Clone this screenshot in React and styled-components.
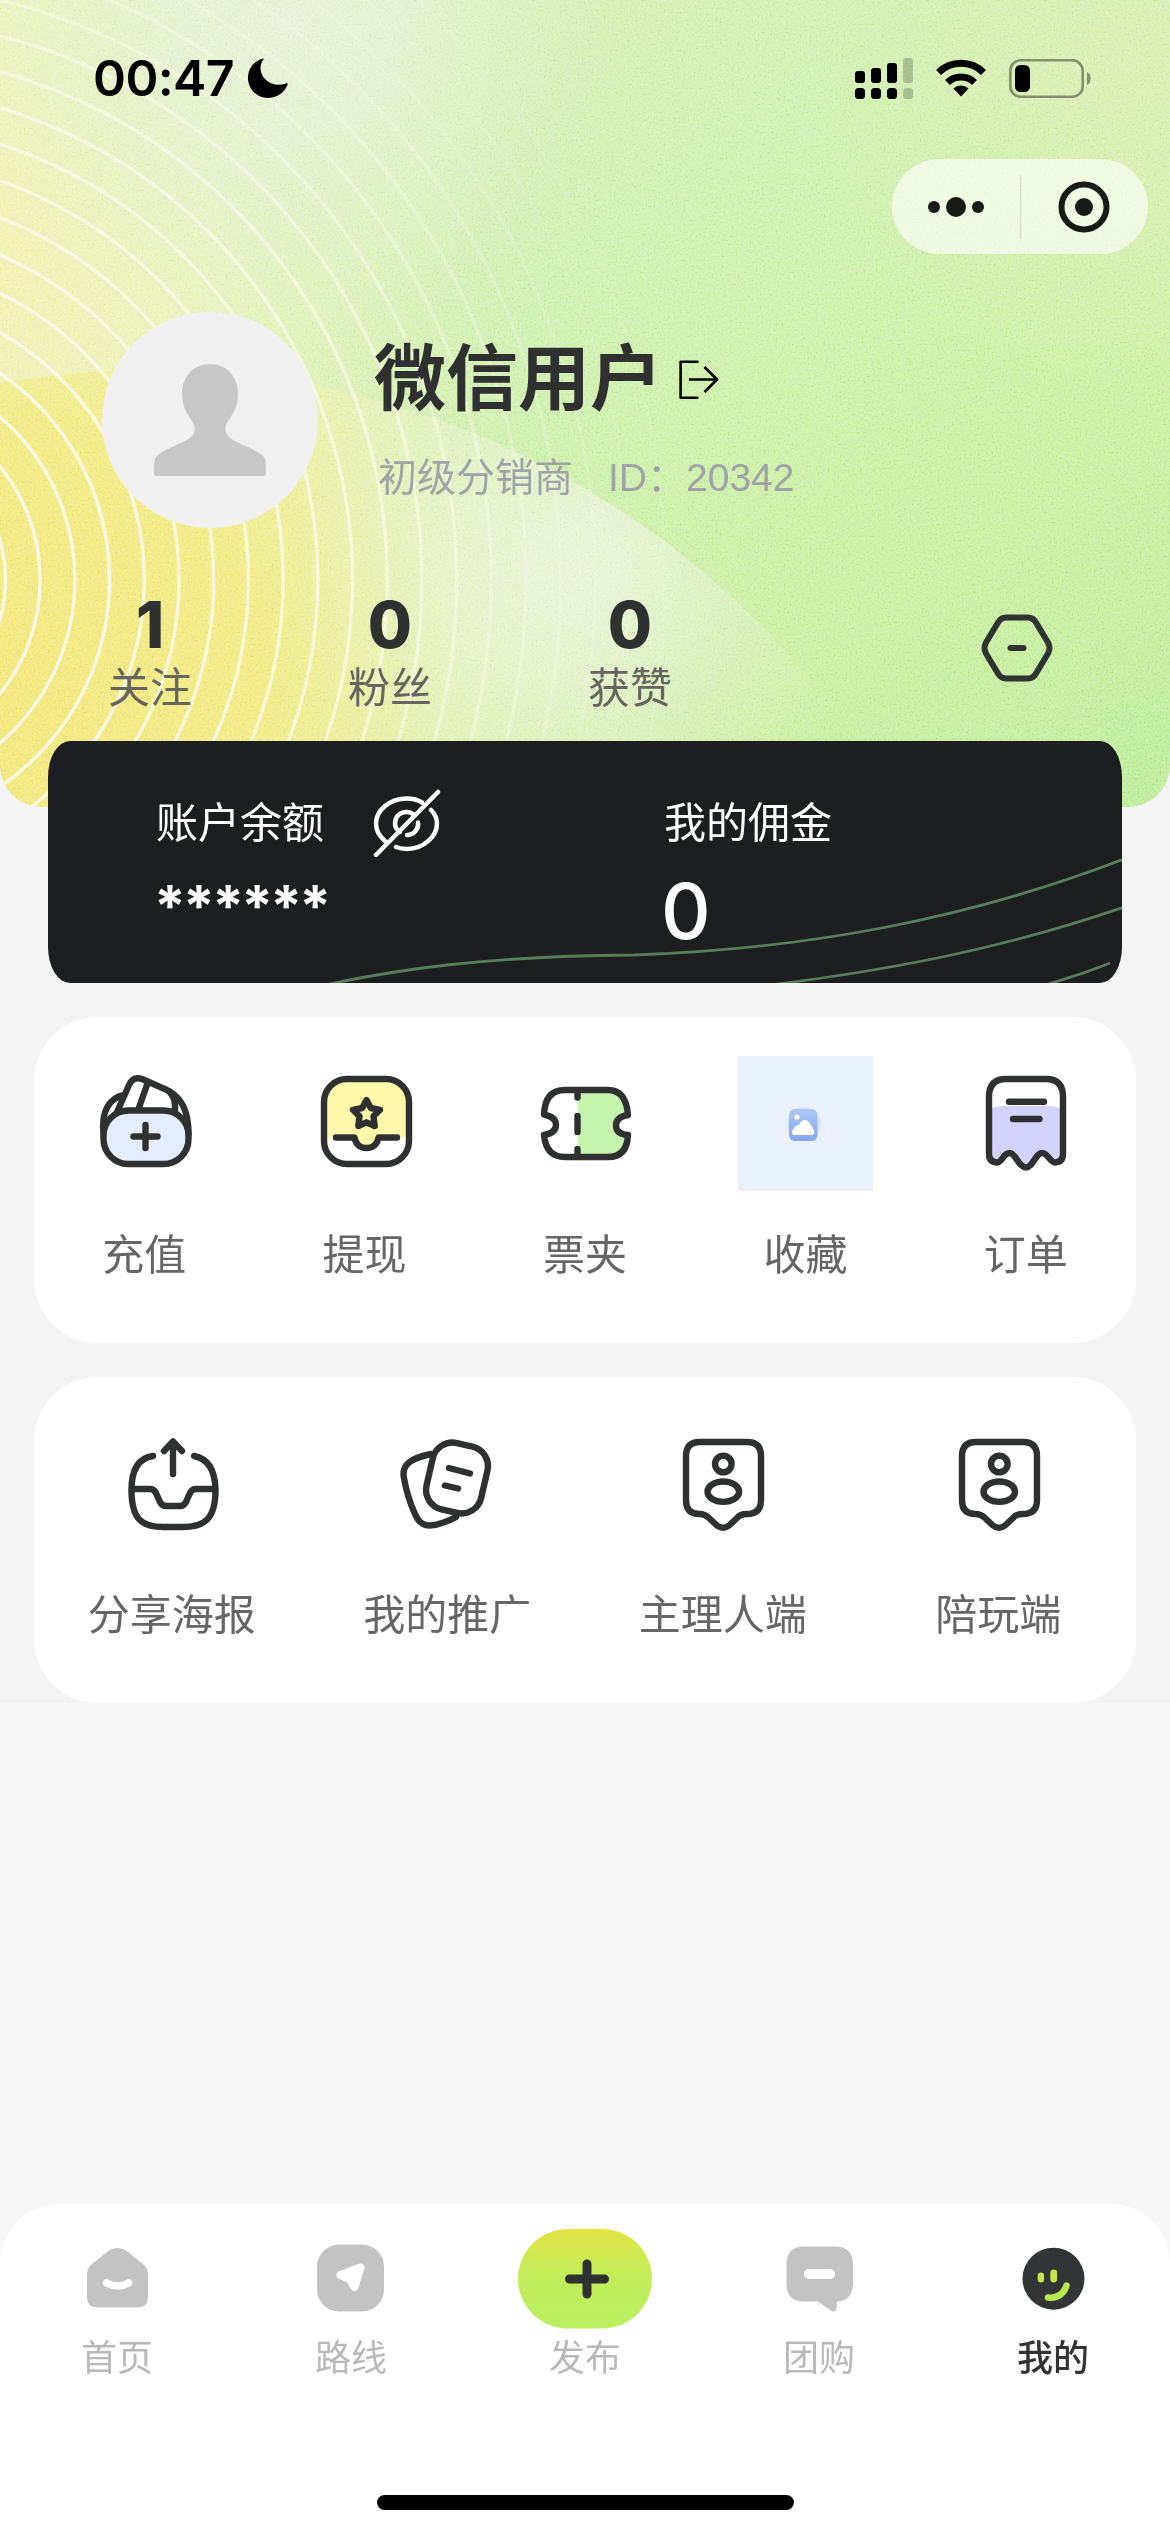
import React from "react";
import styled, { createGlobalStyle } from "styled-components";

const cjk = `"Noto Sans CJK SC", sans-serif`;
const latin = `Inter, "Noto Sans CJK SC", sans-serif`;
const INK = "#2f3030";

const GlobalStyle = createGlobalStyle`
  * { box-sizing: border-box; }
  body { margin: 0; background: #f7f7f7; font-family: ${cjk}; }
  svg { display: block; flex: none; }
`;

const Page = styled.div`
  width: 1170px;
  height: 2532px;
  overflow: hidden;
  display: flex;
  flex-direction: column;
  background: linear-gradient(#f4f4f5 0 1703px, #f7f7f7 1703px);
`;

const Hero = styled.header`
  position: relative;
  flex: none;
  height: 807px;
  border-radius: 0 0 42px 42px;
  overflow: hidden;
`;

const HeroArt = styled.svg`
  position: absolute;
  inset: 0;
`;

const HeroContent = styled.div`
  position: relative;
  display: flex;
  flex-direction: column;
`;

const StatusBar = styled.div`
  height: 156px;
  padding: 0 78px 0 93px;
  display: flex;
  align-items: center;
  justify-content: space-between;
`;

const StatusGroup = styled.div`
  display: flex;
  align-items: center;
  gap: ${(p) => p.$gap}px;
`;

const Clock = styled.span`
  font: 600 50px/60px ${latin};
  letter-spacing: -0.6px;
  color: #000;
`;

const CapsuleRow = styled.div`
  display: flex;
  justify-content: flex-end;
  padding: 3px 22px 0 0;
`;

const Capsule = styled.div`
  width: 256px;
  height: 95px;
  border-radius: 48px;
  background: rgba(255, 255, 255, 0.62);
  display: flex;
  align-items: center;
`;

const CapsuleHalf = styled.div`
  flex: 1;
  height: 64px;
  display: flex;
  align-items: center;
  justify-content: center;
  border-left: ${(p) => (p.$divided ? "1px solid rgba(0,0,0,.12)" : "0")};
`;

const Profile = styled.section`
  display: flex;
  padding: 58px 0 0 102px;
  height: 274px;
`;

const Avatar = styled.div`
  width: 216px;
  height: 216px;
  border-radius: 50%;
  overflow: hidden;
  background: #f0f0f0;
`;

const Identity = styled.div`
  display: flex;
  flex-direction: column;
  padding: 21px 0 0 56px;
`;

const NameRow = styled.div`
  display: flex;
  align-items: flex-start;
  gap: 17px;
  height: 80px;
`;

const Name = styled.h1`
  margin: 0;
  font: 700 72px/80px ${cjk};
  color: ${INK};
`;

const ExitButton = styled.div`
  padding-top: 27px;
`;

const Meta = styled.p`
  margin: 42px 0 0 4px;
  display: flex;
  gap: 35px;
  font: 400 39px/46px "Liberation Sans", ${cjk};
  color: #a0a3a8;
`;

const StatsRow = styled.section`
  display: flex;
  align-items: flex-start;
  padding: 61px 0 0 30px;
`;

const Stat = styled.div`
  width: 240px;
  display: flex;
  flex-direction: column;
  align-items: center;
`;

const StatValue = styled.strong`
  font: 800 64px/72px ${latin};
  color: ${INK};
`;

const StatLabel = styled.span`
  font: 400 42px/48px ${cjk};
  color: #66665f;
`;

const SettingsButton = styled.div`
  margin-left: 231px;
  padding-top: 25px;
`;

const BalanceCard = styled.section`
  position: relative;
  flex: none;
  margin: -66px 48px 0;
  height: 242px;
  border-radius: 22px / 36px;
  overflow: hidden;
  background: #1c1e1f;
  color: #fff;
  display: grid;
  grid-template-columns: 508px 1fr;
  padding: 48px 0 0 108px;
`;

const CardLines = styled.svg`
  position: absolute;
  inset: 0;
`;

const BalanceColumn = styled.div`
  position: relative;
  display: flex;
  flex-direction: column;
`;

const BalanceHead = styled.div`
  display: flex;
  align-items: flex-start;
  gap: 49px;
  height: 62px;
  font: 400 42px/61px ${cjk};
`;

const Masked = styled.span`
  font: 700 57px/60px ${latin};
  letter-spacing: -2.8px;
  padding-top: 25px;
  margin-left: -2px;
`;

const Amount = styled.span`
  font: 500 77px/80px ${latin};
  padding-top: 20px;
  margin-left: -3px;
`;

const Panel = styled.section`
  flex: none;
  margin: 34px 34px 0;
  height: 326px;
  border-radius: 64px;
  background: #fff;
  display: grid;
  grid-template-columns: repeat(${(p) => p.$columns}, 1fr);
  padding-top: 39px;
`;

const Entry = styled.div`
  display: flex;
  flex-direction: column;
  align-items: center;
  gap: 36px;
`;

const EntryLabel = styled.span`
  font: 400 42px/50px ${cjk};
  color: #666;
`;

const TabBar = styled.nav`
  flex: none;
  margin-top: auto;
  height: 328px;
  border-radius: 60px 60px 0 0;
  background: #fff;
  display: flex;
  flex-direction: column;
  align-items: center;
  justify-content: space-between;
  padding: 25px 0 22px;
`;

const Tabs = styled.div`
  align-self: stretch;
  display: grid;
  grid-template-columns: repeat(5, 1fr);
`;

const Tab = styled.div`
  display: flex;
  flex-direction: column;
  align-items: center;
  gap: 5px;
`;

const TabLabel = styled.span`
  font: ${(p) => (p.$active ? 500 : 400)} 36px/42px ${cjk};
  color: ${(p) => (p.$active ? "#333" : "#b9b9b9")};
`;

const HomeIndicator = styled.div`
  width: 417px;
  height: 15px;
  border-radius: 8px;
  background: #000;
`;

const Art = () => {
  const rings = Array.from({ length: 20 }, (_, i) => 145.5 + 34.7 * i);
  return (
    <HeroArt width="1170" height="807" viewBox="0 0 1170 807">
      <defs>
        <radialGradient id="topLeft" gradientUnits="userSpaceOnUse" cx="-60" cy="260" r="600">
          <stop offset="0" stopColor="#f2efad" />
          <stop offset=".45" stopColor="#ecf1b8" stopOpacity=".9" />
          <stop offset="1" stopColor="#e0f2bb" stopOpacity="0" />
        </radialGradient>
        <radialGradient id="haze" gradientUnits="userSpaceOnUse" cx="290" cy="20" r="340">
          <stop offset="0" stopColor="#e6efd6" />
          <stop offset=".4" stopColor="#e2efcf" stopOpacity=".8" />
          <stop offset="1" stopColor="#d8f0c4" stopOpacity="0" />
        </radialGradient>
        <radialGradient id="corner" gradientUnits="userSpaceOnUse" cx="1130" cy="60" r="330">
          <stop offset="0" stopColor="#deedb2" />
          <stop offset="1" stopColor="#d4f0b0" stopOpacity="0" />
        </radialGradient>
        <radialGradient id="sun" gradientUnits="userSpaceOnUse" cx="-20" cy="700" r="680">
          <stop offset="0" stopColor="#f1e577" />
          <stop offset=".42" stopColor="#f1eb83" />
          <stop offset=".56" stopColor="#eeee98" stopOpacity=".85" />
          <stop offset=".75" stopColor="#edf0b4" stopOpacity=".5" />
          <stop offset="1" stopColor="#e4f0c0" stopOpacity="0" />
        </radialGradient>
        <radialGradient id="glow" gradientUnits="userSpaceOnUse" cx="580" cy="570" r="290">
          <stop offset="0" stopColor="#ecf2de" stopOpacity=".85" />
          <stop offset=".4" stopColor="#eaf2d8" stopOpacity=".6" />
          <stop offset="1" stopColor="#e4f2cc" stopOpacity="0" />
        </radialGradient>
        <linearGradient id="base" x1="0" y1="0" x2="1" y2="1">
          <stop offset="0" stopColor="#e4f0bb" />
          <stop offset=".4" stopColor="#cdefaf" />
          <stop offset=".75" stopColor="#c9ee9f" />
          <stop offset="1" stopColor="#bcec9a" />
        </linearGradient>
        <radialGradient id="ringFade" gradientUnits="userSpaceOnUse" cx="-140" cy="580" r="810">
          <stop offset=".3" stopColor="#fbf9ec" stopOpacity=".9" />
          <stop offset=".6" stopColor="#fbf9ec" stopOpacity=".7" />
          <stop offset=".95" stopColor="#fbf9ec" stopOpacity=".1" />
        </radialGradient>
        <filter id="grain" x="0" y="0" width="100%" height="100%">
          <feTurbulence type="fractalNoise" baseFrequency=".5" numOctaves="3" seed="4" />
          <feColorMatrix values="2 0 0 0 -.5  2 0 0 0 -.5  2 0 0 0 -.5  0 0 0 0 1" />
        </filter>
      </defs>
      <rect width="1170" height="807" fill="url(#base)" />
      <rect width="1170" height="807" fill="url(#topLeft)" />
      <rect width="1170" height="807" fill="url(#haze)" />
      <rect width="1170" height="807" fill="url(#corner)" />
      <circle cx="150" cy="1228" r="858" fill="url(#sun)" />
      <circle cx="150" cy="1228" r="858" fill="url(#glow)" />
      <g fill="none" stroke="url(#ringFade)" strokeWidth="3.4">
        {rings.map((r) => (
          <circle key={r} cx="-140" cy="580" r={r} />
        ))}
      </g>
      <g style={{ mixBlendMode: "soft-light" }} opacity=".5">
        <rect width="1170" height="807" filter="url(#grain)" />
      </g>
    </HeroArt>
  );
};

const Moon = () => (
  <svg width="40" height="40" viewBox="0 0 40 40">
    <path d="M14.5 0.5C5.500 3.500 0 11 0 20c0 11 8.800 20 19.800 20C28.500 40 36 35 39.500 27c.5-1.300-.4-2-1.600-1.500C25 30 12.500 21.500 12.500 10c0-3 .9-5.500 2.800-8.300.6-.9.1-1.500-.8-1.200z" />
  </svg>
);

const Signal = () => (
  <svg width="58" height="41" viewBox="0 0 58 41">
    {[13, 10, 5, 0].map((y, i) => (
      <g key={y} opacity={i === 3 ? 0.2 : 1}>
        <rect x={i * 16} y={y} width="10" height={25 - y} rx="3" />
        <rect x={i * 16} y="30" width="10" height="11" rx="3.500" />
      </g>
    ))}
  </svg>
);

const Wifi = () => (
  <svg width="50" height="38" viewBox="0 0 50 38">
    <g fill="none" stroke="#000" strokeWidth="7">
      <path d="M2.500 13.500A32 32 0 0 1 47.500 13.500" />
      <path d="M11.500 23.500A19.500 19.500 0 0 1 38.500 23.500" />
    </g>
    <path d="M17.500 29.500a11 11 0 0 1 15 0L25 37.500z" />
  </svg>
);

const Battery = () => (
  <svg width="83" height="39" viewBox="0 0 83 39">
    <rect x="1.300" y="1.300" width="72.400" height="36.400" rx="10.500" fill="none" stroke="#000" strokeOpacity=".4" strokeWidth="2.600" />
    <rect x="6" y="6" width="15" height="27" rx="5.500" />
    <path d="M78 13c5 2.200 5 10.800 0 13z" opacity=".4" />
  </svg>
);

const Dots = () => (
  <svg width="56" height="20" viewBox="0 0 56 20" fill="#171b14">
    <circle cx="6" cy="10" r="6" />
    <circle cx="28" cy="10" r="10" />
    <circle cx="50" cy="10" r="6" />
  </svg>
);

const Target = () => (
  <svg width="52" height="52" viewBox="0 0 52 52">
    <circle cx="26" cy="26" r="22.500" fill="none" stroke="#171b14" strokeWidth="6" />
    <circle cx="26" cy="26" r="9" fill="#171b14" />
  </svg>
);

const Person = () => (
  <svg width="216" height="216" viewBox="0 0 216 216">
    <path
      d="M108 52c16 0 28 12 28 30 0 12-5 20-10 27-5 8-3 14 5 19 9 5 22 9 29 15 4 3 4 8 4 19q0 2-2 2H54q-2 0-2-2c0-11 0-16 4-19 7-6 20-10 29-15 8-5 10-11 5-19-5-7-10-15-10-27 0-18 12-30 28-30z"
      fill="#c9c8c9"
    />
  </svg>
);

const Exit = () => (
  <svg width="40" height="40" viewBox="0 0 40 40" fill="none" stroke="#000" strokeWidth="2.600">
    <path d="M19.500 1.700H1.600v36h17.900M10 19.500h28M25.500 7 38 19.500 25.500 32" strokeLinejoin="round" />
  </svg>
);

const Hexagon = () => (
  <svg width="72" height="68" viewBox="0 0 72 68" fill="none" stroke="#2f3430" strokeWidth="6" strokeLinecap="round" strokeLinejoin="round">
    <path d="M25 3.500h22q5 0 8 5l12 20q3 5.500 0 11l-12 20q-3 5-8 5H25q-5 0-8-5l-12-20q-3-5.500 0-11l12-20q3-5 8-5z" />
    <path d="M29.500 34h13" />
  </svg>
);

const EyeOff = () => (
  <svg width="68" height="68" viewBox="0 0 68 68" fill="none" stroke="#fff" strokeWidth="4.500" strokeLinecap="round">
    <path d="M12 52C5 46 3 40 3 34.500 3 22 16 9.500 34 9.500c6 0 11 1.500 15 4" />
    <path d="M58 21c4 4 6 9 6 13.500C64 47 51 60 34 60c-4 0-8-.8-11-2" />
    <path d="M27 43c-3-2-5-5-5-8.500C22 27 27.500 23 33.500 23c3 0 5.500 1 7.500 3" />
    <path d="M45 33.500c1 6-4 12.500-11 12.500" />
    <path d="M3 66 65 3" />
  </svg>
);

const iconProps = {
  width: 135,
  height: 135,
  viewBox: "0 0 135 135",
  fill: "none",
  stroke: INK,
  strokeWidth: 6.4,
  strokeLinecap: "round",
  strokeLinejoin: "round",
};

const Recharge = () => (
  <svg {...iconProps}>
    <path d="M26.500 78C24 54 33 42 47 39M92 35c13 8 19.500 20 19.500 43" />
    <path d="M40.500 55 52 29q4-9 13-6l25 11q9 5 8 22z" fill="#fff" />
    <path d="M71 26 61.500 53" />
    <rect x="26.500" y="54.500" width="85" height="53.500" rx="25" fill="#e4ecff" />
    <path d="M56.500 80.500h24M68.500 69v23" />
  </svg>
);

const Withdraw = () => (
  <svg {...iconProps}>
    <rect x="27" y="23" width="85" height="85" rx="23" fill="#fff" stroke="none" />
    <path d="M27 81.500V46q0-23 23-23h39q23 0 23 23v35.500H81q-2 10.500-11.500 10.500T58 81.500z" fill="#fff8ab" stroke="none" />
    <rect x="27" y="23" width="85" height="85" rx="23" />
    <path d="M39 81.500h18.500q2 10.500 12 10.500t12-10.500H100" />
    <path d="m69.500 44 4.300 8 9.200 1.800-6.500 6.500 1.200 9.700-8.200-3.700-8.200 3.700 1.200-9.700L56 53.800l9.200-1.800z" />
  </svg>
);

const ticketPath =
  "M48 34h43q18 0 20 25-12 2-12 10.500T111 79q-1 22-20 22H48q-19 0-21-22 12-2 12-10T27 58.500Q28 34 48 34z";

const Ticket = () => (
  <svg {...iconProps}>
    <path d="M61 34h30q18 0 20 25-12 2-12 10.500T111 79q-1 22-20 22H61z" fill="#c5f4ae" stroke="none" />
    <path d={ticketPath} />
    <path d="M60.500 36v5.500M60.500 60v16M60.500 93v6" />
  </svg>
);

const Placeholder = () => (
  <svg width="135" height="135" viewBox="0 0 135 135">
    <defs>
      <linearGradient id="photo" x1="0" y1="0" x2="0" y2="1">
        <stop offset="0" stopColor="#adc6f5" />
        <stop offset="1" stopColor="#82a6ee" />
      </linearGradient>
    </defs>
    <rect width="135" height="135" fill="#e9f1fd" />
    <circle cx="66" cy="68" r="17" fill="#d8e6fd" />
    <rect x="51" y="53" width="28.500" height="32" rx="6" fill="url(#photo)" />
    <circle cx="59" cy="61" r="2.600" fill="#fff" />
    <path d="M54 76c1-4 4-7 7-7 2-4 4-5 6-5 4 0 7 6 9 11 .8 2.500-.5 4-2.500 4H56.500q-3 0-2.500-3z" fill="#fff" />
  </svg>
);

const Orders = () => (
  <svg {...iconProps}>
    <path d="M31 54q6-4 14-4h46q8 0 14 4v44q-2 8-8 8l-13-8-16 13-17-13-12 8q-6 0-8-8z" fill="#d3d3fd" stroke="none" />
    <path d="M31 98V41q0-18 17-18h40q17 0 17 18v57q0 8-8 8.500c-5 0-7-9.500-13-9.500-6.500 0-9 14.500-16 14.500S57.500 97 51.500 97 44 106.500 39 106.500Q31 106 31 98z" />
    <path d="M51 45.700h35M55 63h26.500" />
  </svg>
);

const Share = () => (
  <svg {...iconProps}>
    <path d="M49 40Q27.500 43 27.500 74c0 29 10 37 32 37h19c22 0 33-8 33-37Q111 44 90 40" />
    <path d="M28 73h18q4 0 6 4l4 9q2 4 6 4h14q4 0 6-4l4-9q2-4 6-4h19" />
    <path d="M69 58V26M60 35l9-9.500 9 9.500" />
  </svg>
);

const Promo = () => (
  <svg {...iconProps}>
    <path d="M51 38C32 42 21 48 24 62c2 12 6 25 11 36 5 12 13 14 27 9 5-1.500 9-3 14-6" />
    <rect x="49" y="28" width="56" height="68" rx="20" transform="rotate(13 77 62)" fill="#fff" />
    <path d="m69 52 21 5.500M65 69.500l13 3" />
  </svg>
);

const Badge = () => (
  <svg {...iconProps}>
    <path d="M45 26h47q14 0 14 14v44q0 14-14 14-7 0-10 4l-8 7.500q-6 4.500-12 0L54 102q-4-4-10-4-13 0-13-14V40q0-14 14-14z" />
    <circle cx="68.300" cy="48" r="8.300" />
    <ellipse cx="68.300" cy="75.700" rx="15.800" ry="10.200" />
  </svg>
);

const tabProps = { width: 134, height: 100, viewBox: "0 0 134 100" };
const MUTED = "#c3c3c3";

const HomeIcon = () => (
  <svg {...tabProps}>
    <path d="M37 45q0-6 5-10l15-12q10-8 21 0l15 12q5 4 5 10v23q0 10.500-10 10.500H47Q37 78.500 37 68z" fill={MUTED} />
    <path d="M56.500 54q11 6 22 0" fill="none" stroke="#fff" strokeWidth="7.500" strokeLinecap="round" />
  </svg>
);

const RouteIcon = () => (
  <svg {...tabProps}>
    <rect x="33" y="15.500" width="67" height="67" rx="22" fill={MUTED} />
    <path d="M76.500 38.500 56.500 46l9.500 4.500L70.500 58z" fill="#fff" stroke="#fff" strokeWidth="8" strokeLinejoin="round" />
  </svg>
);

const PublishIcon = () => (
  <svg {...tabProps}>
    <defs>
      <linearGradient id="lime" x1="0" y1="0" x2="0" y2="1">
        <stop offset="0" stopColor="#e2e346" />
        <stop offset=".45" stopColor="#c3ed59" />
        <stop offset="1" stopColor="#b9f062" />
      </linearGradient>
    </defs>
    <rect width="134" height="99.500" rx="49.700" fill="url(#lime)" />
    <path d="M51.500 50h35M69 35v30" stroke={INK} strokeWidth="9" strokeLinecap="round" />
  </svg>
);

const GroupIcon = () => (
  <svg {...tabProps}>
    <path d="M52 17.500h31q18 0 18 18v19q0 17-16 18l-.5 6q-.5 5.500-5 3.500L66 72.500H52q-17.500 0-17.500-18v-19q0-18 17.500-18z" fill={MUTED} />
    <path d="M57 45h21" stroke="#fff" strokeWidth="10" strokeLinecap="round" />
  </svg>
);

const MineIcon = () => (
  <svg {...tabProps}>
    <circle cx="67.500" cy="49.700" r="31" fill="#333435" />
    <g fill="#c9e34d">
      <rect x="51.700" y="43.500" width="6.400" height="10" rx="3.200" />
      <rect x="64.300" y="40.500" width="6.800" height="13" rx="3.400" />
    </g>
    <path d="M62 68.500q14 1.500 18.500-12" fill="none" stroke="#b9e850" strokeWidth="6.500" strokeLinecap="round" />
  </svg>
);

const stats = [
  ["1", "关注"],
  ["0", "粉丝"],
  ["0", "获赞"],
];

const wallet = [
  ["充值", Recharge],
  ["提现", Withdraw],
  ["票夹", Ticket],
  ["收藏", Placeholder],
  ["订单", Orders],
];

const tools = [
  ["分享海报", Share],
  ["我的推广", Promo],
  ["主理人端", Badge],
  ["陪玩端", Badge],
];

const tabs = [
  ["首页", HomeIcon],
  ["路线", RouteIcon],
  ["发布", PublishIcon],
  ["团购", GroupIcon],
  ["我的", MineIcon, true],
];

const EntryPanel = ({ items }) => (
  <Panel $columns={items.length}>
    {items.map(([label, Icon]) => (
      <Entry key={label}>
        <Icon />
        <EntryLabel>{label}</EntryLabel>
      </Entry>
    ))}
  </Panel>
);

export default function App() {
  return (
    <Page>
      <GlobalStyle />
      <Hero>
        <Art />
        <HeroContent>
          <StatusBar>
            <StatusGroup $gap={14}>
              <Clock>00:47</Clock>
              <Moon />
            </StatusGroup>
            <StatusGroup $gap={23}>
              <Signal />
              <Wifi />
              <Battery />
            </StatusGroup>
          </StatusBar>
          <CapsuleRow>
            <Capsule>
              <CapsuleHalf>
                <Dots />
              </CapsuleHalf>
              <CapsuleHalf $divided>
                <Target />
              </CapsuleHalf>
            </Capsule>
          </CapsuleRow>
          <Profile>
            <Avatar>
              <Person />
            </Avatar>
            <Identity>
              <NameRow>
                <Name>微信用户</Name>
                <ExitButton>
                  <Exit />
                </ExitButton>
              </NameRow>
              <Meta>
                <span>初级分销商</span>
                <span>ID：20342</span>
              </Meta>
            </Identity>
          </Profile>
          <StatsRow>
            {stats.map(([value, label]) => (
              <Stat key={label}>
                <StatValue>{value}</StatValue>
                <StatLabel>{label}</StatLabel>
              </Stat>
            ))}
            <SettingsButton>
              <Hexagon />
            </SettingsButton>
          </StatsRow>
        </HeroContent>
      </Hero>

      <BalanceCard>
        <CardLines width="1074" height="242" viewBox="0 0 1074 242" fill="none" stroke="#557f5a" strokeWidth="2.800">
          <path d="M272 245C350 228 440 215 586 214C760 208 920 178 1076 118" />
          <path d="M722 244C850 228 960 206 1076 166" />
          <path d="M1000 243Q1035 233 1062 222" />
        </CardLines>
        <BalanceColumn>
          <BalanceHead>
            账户余额
            <EyeOff />
          </BalanceHead>
          <Masked>******</Masked>
        </BalanceColumn>
        <BalanceColumn>
          <BalanceHead>我的佣金</BalanceHead>
          <Amount>0</Amount>
        </BalanceColumn>
      </BalanceCard>

      <EntryPanel items={wallet} />
      <EntryPanel items={tools} />

      <TabBar>
        <Tabs>
          {tabs.map(([label, Icon, active]) => (
            <Tab key={label}>
              <Icon />
              <TabLabel $active={active}>{label}</TabLabel>
            </Tab>
          ))}
        </Tabs>
        <HomeIndicator />
      </TabBar>
    </Page>
  );
}
